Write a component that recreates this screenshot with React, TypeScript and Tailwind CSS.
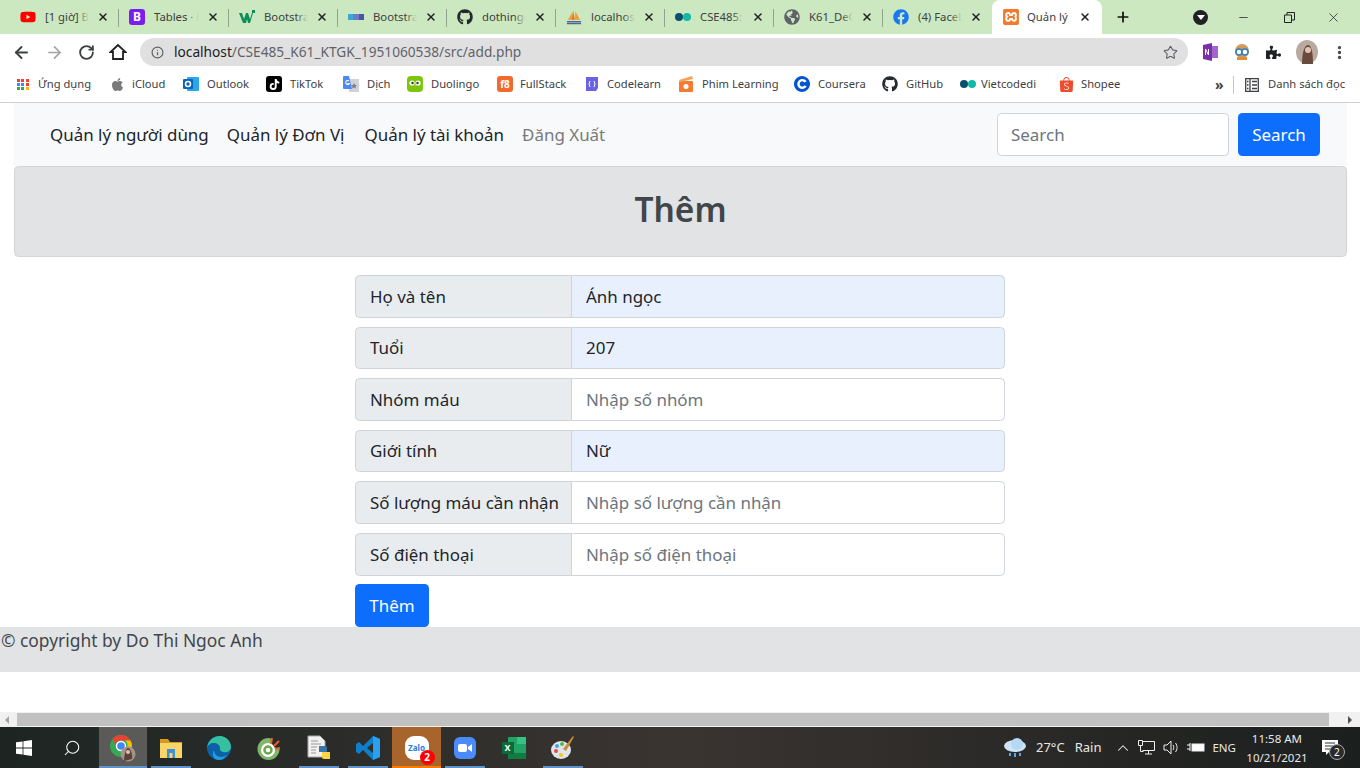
import type { ReactNode } from 'react';
import { FaYoutube, FaGithub, FaFacebook, FaApple, FaPuzzlePiece, FaGlobeAmericas, FaTiktok } from 'react-icons/fa';
import { SiXampp, SiShopee, SiCoursera } from 'react-icons/si';
import { ArrowLeft, ArrowRight, RotateCw, Info, Star, Plus, X, Minus, ChevronUp, Search, MoreVertical } from 'lucide-react';

const font = 'font-["Noto_Sans","Open_Sans",sans-serif]';

const Dots = () => (
  <svg width="16" height="10" viewBox="0 0 16 10">
    <circle cx="4" cy="5" r="4" fill="#0b4f6c" />
    <circle cx="12" cy="5" r="4" fill="#14b8a6" />
  </svg>
);

const W3 = () => (
  <svg width="16" height="14" viewBox="0 0 16 14">
    <path d="M0 3h3l2 6 2-6h2l2 6 2-6h1l-3 10H9L8 9l-1 4H4z" fill="#0d8f5b" />
    <rect x="13" y="0" width="3" height="3" fill="#0d8f5b" />
  </svg>
);

const MdbLogo = () => (
  <svg width="16" height="6" viewBox="0 0 16 6">
    <rect width="5" height="6" fill="#3ba6d8" />
    <rect x="5" width="6" height="6" fill="#6b7cc8" />
    <rect x="11" width="5" height="6" fill="#4a55a8" />
  </svg>
);

const Pma = () => (
  <svg width="17" height="17" viewBox="0 0 17 17">
    <path d="M2 11 8 1l1 10zM9 11l1-9 5 9z" fill="#f39c3c" />
    <path d="M6 11 8 4l1 7z" fill="#d9772a" />
    <path d="M1 13h15M1 15h15" stroke="#4a6796" strokeWidth="1.500" />
  </svg>
);

const BootstrapIco = () => (
  <span className="w-4 h-4 rounded-[3px] bg-[#7c1df0] text-white text-[12px] leading-4 font-bold text-center">B</span>
);

const tabs: { icon: ReactNode; title: string; cls: string }[] = [
  { icon: <FaYoutube size={16} color="#ff0000" />, title: '[1 giờ] Bootstrap', cls: 'w-[109px]' },
  { icon: <BootstrapIco />, title: 'Tables · Bootstrap', cls: 'w-[110px]' },
  { icon: <W3 />, title: 'Bootstrap Tables', cls: 'w-[109px]' },
  { icon: <MdbLogo />, title: 'Bootstrap Table', cls: 'w-[109px]' },
  { icon: <FaGithub size={16} color="#24292e" />, title: 'dothingocanh', cls: 'w-[109px]' },
  { icon: <Pma />, title: 'localhost / phpMyAdmin', cls: 'w-[109px]' },
  { icon: <Dots />, title: 'CSE485: Công nghệ', cls: 'w-[109px]' },
  { icon: <FaGlobeAmericas size={16} color="#5f6368" />, title: 'K61_DeCuong', cls: 'w-[109px]' },
  { icon: <FaFacebook size={16} color="#1877f2" />, title: '(4) Facebook', cls: 'w-[109px]' },
];

function Tab({ icon, title, cls, last }: { icon: ReactNode; title: string; cls: string; last: boolean }) {
  return (
    <div className={`${cls} h-[34px] flex items-center pl-[10px] pr-[10px] relative`}>
      <span className="w-4 h-4 flex items-center justify-center shrink-0">{icon}</span>
      <span className="ml-[9px] w-[49px] overflow-hidden whitespace-nowrap text-[11.300px] text-[#3c4043] relative">
        {title}
        <span className="absolute right-0 top-0 bottom-0 w-3 bg-gradient-to-r from-transparent to-[#cce8c0]" />
      </span>
      <X size={12} strokeWidth={3} color="#202124" className="ml-[8px] shrink-0" />
      {!last && <span className="absolute right-0 top-[9px] h-[18px] w-px bg-[#8fa488]" />}
    </div>
  );
}

function Grid9() {
  const c = ['#ea4335', '#ea4335', '#ea4335', '#4285f4', '#4285f4', '#ea4335', '#34a853', '#34a853', '#fbbc05'];
  return (
    <span className="grid grid-cols-3 gap-[1px] w-[13px]">
      {c.map((col, i) => (
        <svg key={i} width="3" height="3"><rect width="3" height="3" fill={col} /></svg>
      ))}
    </span>
  );
}

const OutlookIco = () => (
  <svg width="16" height="16" viewBox="0 0 16 16">
    <rect x="4" y="1" width="12" height="14" rx="1" fill="#28a8ea" />
    <rect x="0" y="3" width="10" height="10" rx="1" fill="#0a64b5" />
    <circle cx="5" cy="8" r="2.500" fill="none" stroke="#fff" strokeWidth="1.500" />
  </svg>
);

const TikTokIco = () => (
  <span className="w-4 h-4 rounded-[3px] bg-black flex items-center justify-center">
    <FaTiktok size={11} color="#fff" />
  </span>
);

const DichIco = () => (
  <svg width="16" height="16" viewBox="0 0 16 16">
    <rect x="6" y="3" width="10" height="13" fill="#cfd2d6" />
    <path d="M11 7l1 2h2l-1.500 1.500.5 2-2-1-2 1 .5-2L8 9h2z" fill="#7d8186" />
    <path d="M0 1a1 1 0 0 1 1-1h5l3 13H1a1 1 0 0 1-1-1z" fill="#4a8af4" />
    <path d="M6 5a2 2 0 1 0 .5 2.500H4.500" stroke="#fff" strokeWidth="1.100" fill="none" />
  </svg>
);

const DuoIco = () => (
  <svg width="16" height="16" viewBox="0 0 16 16">
    <rect width="16" height="16" rx="4" fill="#7ac70c" />
    <circle cx="5" cy="7" r="2.600" fill="#fff" />
    <circle cx="11" cy="7" r="2.600" fill="#fff" />
    <circle cx="5.500" cy="7" r="1.200" fill="#333" />
    <circle cx="10.500" cy="7" r="1.200" fill="#333" />
    <path d="M7 9h2l-1 2z" fill="#f5a623" />
  </svg>
);

const F8Ico = () => (
  <span className="w-4 h-4 rounded-[3px] bg-[#f26a2e] text-white text-[10px] leading-4 font-bold text-center">f8</span>
);

const CodelearnIco = () => (
  <svg width="16" height="16" viewBox="0 0 16 16">
    <path d="M2 1h12v11l-2 3H2z" fill="#6c63e0" />
    <path d="M6 5 5 8l1 3M10 5l1 3-1 3" stroke="#fff" fill="none" />
  </svg>
);

const PhimIco = () => (
  <svg width="16" height="16" viewBox="0 0 16 16">
    <rect x="1" y="5" width="14" height="11" rx="1" fill="#f47b30" />
    <path d="M1 4 14 0l1 3L2 6z" fill="#f9a05f" />
    <circle cx="8" cy="10.500" r="2.500" fill="#fff" />
  </svg>
);

const bookmarks: { icon: ReactNode; label: string; cls: string }[] = [
  { icon: <Grid9 />, label: 'Ứng dụng', cls: 'w-[95px] gap-[7px] pl-[1px]' },
  { icon: <FaApple size={15} color="#7a7a7a" />, label: 'iCloud', cls: 'w-[74px] gap-[7px]' },
  { icon: <OutlookIco />, label: 'Outlook', cls: 'w-[83px] gap-[8px]' },
  { icon: <TikTokIco />, label: 'TikTok', cls: 'w-[77px] gap-[8px]' },
  { icon: <DichIco />, label: 'Dịch', cls: 'w-[64px] gap-[8px]' },
  { icon: <DuoIco />, label: 'Duolingo', cls: 'w-[90px] gap-[8px]' },
  { icon: <F8Ico />, label: 'FullStack', cls: 'w-[87px] gap-[7px]' },
  { icon: <CodelearnIco />, label: 'Codelearn', cls: 'w-[94px] gap-[7px]' },
  { icon: <PhimIco />, label: 'Phim Learning', cls: 'w-[116px] gap-[8px]' },
  { icon: <SiCoursera size={16} color="#0056d2" />, label: 'Coursera', cls: 'w-[88px] gap-[8px]' },
  { icon: <FaGithub size={16} color="#24292e" />, label: 'GitHub', cls: 'w-[78px] gap-[8px]' },
  { icon: <Dots />, label: 'Vietcodedi', cls: 'w-[98px] gap-[5px]' },
  { icon: <SiShopee size={15} color="#ee4d2d" />, label: 'Shopee', cls: 'w-[80px] gap-[7px]' },
];

function BrowserChrome() {
  return (
    <div className={`shrink-0 ${font}`}>
      <div className="h-[34px] bg-[#cce8c0] flex items-center pl-[10px]">
        {tabs.map((t, i) => (
          <Tab key={t.title} {...t} last={i === tabs.length - 1} />
        ))}
        <div className="w-[110px] h-[34px] bg-white rounded-t-lg flex items-center pl-[11px]">
          <SiXampp size={16} color="#f4792b" className="shrink-0" />
          <span className="ml-[8px] w-[43px] overflow-hidden whitespace-nowrap text-[11.300px] text-[#3c4043]">Quản lý người</span>
          <X size={12} strokeWidth={3} color="#202124" className="ml-[9px] shrink-0" />
        </div>
        <Plus size={16} strokeWidth={2.600} color="#111" className="ml-[13px]" />
        <span className="ml-[62px] w-[15px] h-[15px] rounded-full bg-[#202124] flex items-center justify-center">
          <span className="border-x-[4px] border-x-transparent border-t-[5px] border-t-white" />
        </span>
        <Minus size={13} strokeWidth={1.400} color="#222" className="ml-[29px]" />
        <svg width="11" height="11" viewBox="0 0 11 11" className="ml-[34px]">
          <path d="M.5 3h7v7.500h-7zM3 3V.5h7.500V8H8" fill="none" stroke="#222" />
        </svg>
        <X size={15} strokeWidth={1.200} color="#222" className="ml-[31px]" />
      </div>
      <div className="h-[34px] bg-white flex items-center pt-[2px]">
        <ArrowLeft size={19} strokeWidth={2.400} color="#3c4043" className="ml-[12px]" />
        <ArrowRight size={19} strokeWidth={2.200} color="#a3a5a8" className="ml-[14px]" />
        <RotateCw size={17} strokeWidth={2.600} color="#3c4043" className="ml-[14px]" />
        <svg width="18" height="18" viewBox="0 0 18 18" className="ml-[14px]">
          <path d="M9 2 1.500 9H4v7h10V9h2.500z" fill="none" stroke="#202124" strokeWidth="1.800" strokeLinejoin="miter" />
        </svg>
        <div className="ml-[13px] w-[1048px] h-[28px] rounded-full bg-[#e0e0e0] flex items-center pl-[11px] pr-[10px]">
          <Info size={13} strokeWidth={2.200} color="#5f6368" />
          <span className="ml-[10px] text-[13.700px] text-[#5f6368]">
            <span className="text-[#202124]">localhost</span>/CSE485_K61_KTGK_1951060538/src/add.php
          </span>
          <Star size={15} strokeWidth={1.800} color="#5f6368" className="ml-auto" />
        </div>
        <svg width="16" height="18" viewBox="0 0 16 18" className="ml-[14px]">
          <path d="M1 2 10 0v18l-9-2z" fill="#7b2fa8" />
          <rect x="10" y="3" width="6" height="12" fill="#a664cf" />
          <path d="M3.500 12V6l3 6V6" stroke="#fff" fill="none" />
        </svg>
        <svg width="18" height="18" viewBox="0 0 18 18" className="ml-[15px]">
          <circle cx="9" cy="8" r="7" fill="#d59a5b" />
          <circle cx="6" cy="9" r="3" fill="#fff" stroke="#2f7fc4" strokeWidth="1.500" />
          <circle cx="12" cy="9" r="3" fill="#fff" stroke="#2f7fc4" strokeWidth="1.500" />
          <path d="M4 14h10v3H4z" fill="#e38d3a" />
        </svg>
        <FaPuzzlePiece size={15} color="#202124" className="ml-[15px]" />
        <svg width="22" height="24" viewBox="0 0 22 24" className="ml-[15px]">
          <ellipse cx="11" cy="12" rx="11" ry="12" fill="#b9aaa0" />
          <path d="M6 24c0-10 2-19 6-19s5 10 5 19z" fill="#6b4a3e" />
          <circle cx="12" cy="10" r="3" fill="#e0c5b4" />
        </svg>
        <MoreVertical size={17} strokeWidth={2.600} color="#3c4043" className="ml-[13px]" />
      </div>
      <div className="h-[35px] bg-white border-b border-[#d0d0d0] flex items-center pl-[14px] pb-[1px] text-[11.200px] text-[#3c4043]">
        {bookmarks.map((b) => (
          <div key={b.label} className={`${b.cls} flex items-center shrink-0 whitespace-nowrap`}>
            <span className="w-4 h-4 flex items-center justify-center shrink-0">{b.icon}</span>
            <span>{b.label}</span>
          </div>
        ))}
        <span className="ml-[77px] w-[19px] text-[14px] font-bold leading-none">»</span>
        <span className="ml-[-1px] h-[18px] w-px bg-[#c4c7c5]" />
        <svg width="14" height="14" viewBox="0 0 14 14" className="ml-[11px]">
          <path d="M.7.700h12.600v12.600H.7zM5 .7v12.600M2 3.500h1.500M2 7h1.500M2 10.500h1.500M7 3.500h5M7 7h5M7 10.500h5" fill="none" stroke="#3c4043" strokeWidth="1.300" />
        </svg>
        <span className="ml-[9px] whitespace-nowrap">Danh sách đọc</span>
      </div>
    </div>
  );
}

const rows: { label: string; placeholder?: string; value?: string }[] = [
  { label: 'Họ và tên', value: 'Ánh ngọc' },
  { label: 'Tuổi', value: '207' },
  { label: 'Nhóm máu', placeholder: 'Nhập số nhóm' },
  { label: 'Giới tính', value: 'Nữ' },
  { label: 'Số lượng máu cần nhận', placeholder: 'Nhập số lượng cần nhận' },
  { label: 'Số điện thoại', placeholder: 'Nhập số điện thoại' },
];

function FormRow({ label, placeholder, value }: { label: string; placeholder?: string; value?: string }) {
  return (
    <div className="flex h-[42.600px]">
      <div className="w-[217px] shrink-0 flex items-center pl-[14px] whitespace-nowrap bg-[#e9ecef] border border-[#ced4da] rounded-l-[4.500px] text-[#212529]">
        {label}
      </div>
      <input
        readOnly
        value={value ?? ''}
        placeholder={placeholder}
        className={`flex-1 min-w-0 ml-[-1px] pl-[14px] border border-[#ced4da] rounded-r-[4.500px] text-[#212529] placeholder:text-[#6c757d] outline-none ${value ? 'bg-[#e8f0fe]' : 'bg-white'}`}
      />
    </div>
  );
}

function Page() {
  return (
    <div className={`flex-1 min-h-0 bg-white text-[16.950px] ${font}`}>
      <div className="ml-[14px] mr-[13px]">
        <nav className="h-[63px] bg-[#f8f9fa] flex items-center pl-[36px] pr-[27px]">
          <a className="text-[#212529] mr-[18px]">Quản lý người dùng</a>
          <a className="text-[#212529] mr-[20px]">Quản lý Đơn Vị</a>
          <a className="text-[#212529] mr-[18px]">Quản lý tài khoản</a>
          <a className="text-[#797a7b]">Đăng Xuất</a>
          <input
            readOnly
            placeholder="Search"
            className="ml-auto w-[232px] h-[43px] pl-[13px] bg-white border border-[#ced4da] rounded-[4.500px] placeholder:text-[#6c757d] outline-none"
          />
          <button className="ml-[9px] w-[82px] h-[43px] bg-[#0d6efd] text-white rounded-[4.500px]">Search</button>
        </nav>
        <div className="h-[91px] bg-[#e2e3e5] border border-[#d3d6d8] rounded-[4.500px] flex items-center justify-center">
          <h1 className="text-[33.500px] font-semibold text-[#41464b] mt-[-4px]">Thêm</h1>
        </div>
      </div>
      <div className="w-[650px] ml-[355px] mt-[18px] flex flex-col gap-[9px]">
        {rows.map((r) => (
          <FormRow key={r.label} {...r} />
        ))}
      </div>
      <button className="block ml-[355px] mt-[8.400px] w-[74px] h-[43px] bg-[#0d6efd] text-white rounded-[4.500px]">Thêm</button>
      <footer className="h-[45px] bg-[#e2e3e5] text-[17.400px] text-[#41464b] pl-[1px]">© copyright by Do Thi Ngoc Anh</footer>
    </div>
  );
}

function Scrollbar() {
  return (
    <div className="h-[15px] shrink-0 bg-[#f1f1f1] flex items-center">
      <span className="ml-[5px] border-y-[4px] border-y-transparent border-r-[4px] border-r-[#a3a3a3]" />
      <span className="ml-[8px] w-[1312px] h-[13px] bg-[#c1c1c1]" />
      <span className="ml-[19px] border-y-[4px] border-y-transparent border-l-[4px] border-l-[#505050]" />
    </div>
  );
}

const ChromeIco = () => (
  <svg width="28" height="28" viewBox="0 0 28 28">
    <circle cx="12" cy="12" r="11" fill="#34a853" />
    <path d="M12 1a11 11 0 0 1 9.500 5.500H12a5.500 5.500 0 0 0-5.500 4.500L3.500 5A11 11 0 0 1 12 1z" fill="#ea4335" />
    <path d="M21.500 6.500A11 11 0 0 1 12 23l5-8a5.500 5.500 0 0 0-1-8.500z" fill="#fbbc05" />
    <circle cx="12" cy="12" r="4.500" fill="#4285f4" stroke="#fff" strokeWidth="1.500" />
    <circle cx="19" cy="20" r="7.500" fill="#a5938a" />
    <path d="M15 27c0-6 2-13 4-13s5 6 4 11z" fill="#5b4238" />
    <circle cx="19" cy="18" r="2" fill="#dcc5b5" />
  </svg>
);

const FolderIco = () => (
  <svg width="22" height="20" viewBox="0 0 22 20">
    <path d="M0 1h8l2 3h12v16H0z" fill="#d89a18" />
    <rect x="0" y="5" width="22" height="15" fill="#f8d568" />
    <rect x="7" y="11" width="8" height="9" fill="#3f8fd6" />
    <rect x="9.500" y="15" width="3" height="5" fill="#f8d568" />
  </svg>
);

const EdgeIco = () => (
  <svg width="24" height="24" viewBox="0 0 24 24">
    <circle cx="12" cy="12" r="12" fill="#0d5fa8" />
    <path d="M0 12C1 4 7 0 13 0c6 0 11 5 11 11 0 4-4 6-8 5-3-1-3-2-3-4 0-3-3-5-6-5-4 0-6 2-7 5z" fill="#35c1a0" />
    <path d="M7 14c0 4 3 7 7 7 2 0 4-1 6-2-2 3-5 5-8 5-5 0-8-5-5-10z" fill="#1f9fe0" />
  </svg>
);

const CocCocIco = () => (
  <svg width="24" height="24" viewBox="0 0 24 24">
    <circle cx="11.500" cy="13" r="11" fill="#7fb86a" />
    <path d="M13 0h11v13l-8-2z" fill="#2a2a26" />
    <circle cx="11" cy="14" r="7" fill="#fff" />
    <circle cx="11" cy="14" r="3.500" fill="none" stroke="#6aa84f" strokeWidth="2.500" />
    <path d="M14 8l1-6M17 10l5-5M18 13l5-1" stroke="#e8622c" strokeWidth="2" />
  </svg>
);

const PyFileIco = () => (
  <svg width="24" height="26" viewBox="0 0 24 26">
    <path d="M1 1h12l5 5v16H1z" fill="#f1f1f1" stroke="#aaa" />
    <path d="M4 6h7M4 9h10M4 12h6M4 15h5M4 18h5" stroke="#999" />
    <path d="M12 11h6a2 2 0 0 1 2 2v4h-8z" fill="#3776ab" />
    <path d="M23 24h-6a2 2 0 0 1-2-2v-5h8z" fill="#ffd343" />
  </svg>
);

const VscodeIco = () => (
  <svg width="24" height="24" viewBox="0 0 24 24">
    <path d="M17 0l7 3v18l-7 3L7 14l-4 4-3-2v-8l3-2 4 4zM17 7l-6 5 6 5z" fill="#0f7fc9" />
    <path d="M17 0l7 3v18l-7 3z" fill="#2ba0ee" />
  </svg>
);

const ZaloIco = () => (
  <span className="relative w-[24px] h-[24px] rounded-[9px] bg-white flex items-center justify-center text-[8px] font-bold text-[#2a7de1]">
    Zalo
    <span className="absolute right-[-6px] bottom-[-5px] w-[15px] h-[15px] rounded-full bg-[#ff0000] text-white text-[10px] leading-[15px] text-center">2</span>
  </span>
);

const ZoomIco = () => (
  <svg width="22" height="22" viewBox="0 0 22 22">
    <rect width="22" height="22" rx="6" fill="#4a8cff" />
    <rect x="4" y="7" width="9" height="8" rx="2" fill="#fff" />
    <path d="M14 10l4-3v8l-4-3z" fill="#fff" />
  </svg>
);

const ExcelIco = () => (
  <span className="relative w-[24px] h-[22px] flex">
    <span className="ml-[6px] w-[18px] h-[22px] rounded-[1px] bg-[#21a366]" />
    <span className="absolute right-0 top-0 w-[9px] h-[7px] bg-[#33c481]" />
    <span className="absolute right-0 bottom-0 w-[18px] h-[6px] bg-[#107c41]" />
    <span className="absolute left-0 top-[5px] w-[12px] h-[12px] bg-[#0b6a3a] text-white text-[9px] leading-[12px] font-bold text-center">X</span>
  </span>
);

const PaintIco = () => (
  <svg width="24" height="26" viewBox="0 0 24 26">
    <ellipse cx="10" cy="15" rx="10" ry="9" fill="#dfe6ea" />
    <circle cx="6" cy="11" r="2" fill="#3fa4e8" />
    <circle cx="5" cy="16" r="2" fill="#e84a4a" />
    <circle cx="11" cy="9" r="2" fill="#58b947" />
    <circle cx="10" cy="20" r="2" fill="#f3c331" />
    <path d="M22 1l1 1-8 14-3-2z" fill="#c98a3a" />
  </svg>
);

const taskApps: { icon: ReactNode; cell: string; bar?: string }[] = [
  { icon: <ChromeIco />, cell: 'w-[48px] bg-[#5a5a58]', bar: 'w-[48px] bg-[#5f92c8]' },
  { icon: <FolderIco />, cell: 'w-[48px]', bar: 'w-[40px] bg-[#5f92c8]' },
  { icon: <EdgeIco />, cell: 'w-[48px]' },
  { icon: <CocCocIco />, cell: 'w-[52px]' },
  { icon: <PyFileIco />, cell: 'w-[48px]', bar: 'w-[40px] bg-[#5f92c8]' },
  { icon: <VscodeIco />, cell: 'w-[49px]', bar: 'w-[40px] bg-[#5f92c8]' },
  { icon: <ZaloIco />, cell: 'w-[49px] bg-[#a8652b]', bar: 'w-[49px] bg-[#ff7a00]' },
  { icon: <ZoomIco />, cell: 'w-[48px]', bar: 'w-[40px] bg-[#5f92c8]' },
  { icon: <ExcelIco />, cell: 'w-[49px]' },
  { icon: <PaintIco />, cell: 'w-[49px]', bar: 'w-[40px] bg-[#5f92c8]' },
];

function Taskbar() {
  return (
    <div className={`h-[41px] shrink-0 flex items-center text-[#e8e8e8] bg-gradient-to-r from-[#1d2523] via-[#3a3431] to-[#1b1f1e] ${font}`}>
      <div className="w-[48px] flex justify-center">
        <svg width="16" height="16" viewBox="0 0 16 16">
          <path d="M0 2.300 6.600 1.400v6.200H0zM7.400 1.300 16 0v7.600H7.400zM0 8.400h6.600v6.200L0 13.700zM7.400 8.400H16V16l-8.600-1.300z" fill="#fff" />
        </svg>
      </div>
      <div className="w-[51px] flex justify-center pr-[3px]">
        <Search size={18} strokeWidth={1.400} color="#fff" className="-scale-x-100" />
      </div>
      {taskApps.map((a, i) => (
        <div key={i} className={`${a.cell} h-[41px] flex flex-col items-center justify-center relative shrink-0`}>
          {a.icon}
          {a.bar && <span className={`${a.bar} absolute bottom-0 h-[2px]`} />}
        </div>
      ))}
      <svg width="24" height="20" viewBox="0 0 24 20" className="ml-[416px]">
        <ellipse cx="12" cy="8" rx="11" ry="6" fill="#cfe5f7" />
        <circle cx="14" cy="6" r="6" fill="#b5d8f5" />
        <path d="M7 15v3M12 15v4M17 15v3" stroke="#5ba7e6" strokeWidth="2" />
      </svg>
      <span className="ml-[9px] text-[13px] whitespace-nowrap">27°C</span>
      <span className="ml-[10px] text-[13px]">Rain</span>
      <ChevronUp size={18} strokeWidth={1.400} color="#eee" className="ml-[13px]" />
      <svg width="17" height="15" viewBox="0 0 17 15" className="ml-[6px]">
        <path d="M4.500 1.500h12v9h-12M7 14h7M10.500 10.500V14M.5.500h4v5h-4zM2.500 5.500v6h3" fill="none" stroke="#eee" />
      </svg>
      <svg width="16" height="15" viewBox="0 0 16 15" className="ml-[8px]">
        <path d="M1 5h3l4-4v13l-4-4H1zM10 5c1 1.500 1 3.500 0 5M12.500 3c2 2.500 2 6.500 0 9" fill="none" stroke="#eee" />
      </svg>
      <svg width="18" height="11" viewBox="0 0 18 11" className="ml-[8px]">
        <rect x="5" y="2" width="12" height="7" fill="#fff" stroke="#eee" />
        <path d="M0 3h3M0 7h3M3 1v8" stroke="#fff" />
      </svg>
      <span className="ml-[7px] text-[11.500px]">ENG</span>
      <div className="ml-[11px] w-[60px] flex flex-col items-center text-[11.500px] leading-[19px] whitespace-nowrap">
        <span>11:58 AM</span>
        <span>10/21/2021</span>
      </div>
      <div className="relative ml-[15px]">
        <svg width="18" height="18" viewBox="0 0 18 18">
          <path d="M0 1h16v12H7l-3 3v-3H0z" fill="#fff" />
          <path d="M3 4h10M3 7h10M3 10h6" stroke="#333" />
        </svg>
        <span className="absolute left-[7px] top-[5px] w-[16px] h-[16px] rounded-full bg-[#2b2b2b] border border-[#aaa] text-[10px] leading-[14px] text-center text-white">2</span>
      </div>
    </div>
  );
}

export default function App() {
  return (
    <div className="w-[1360px] h-[768px] overflow-hidden flex flex-col">
      <BrowserChrome />
      <Page />
      <Scrollbar />
      <Taskbar />
    </div>
  );
}
